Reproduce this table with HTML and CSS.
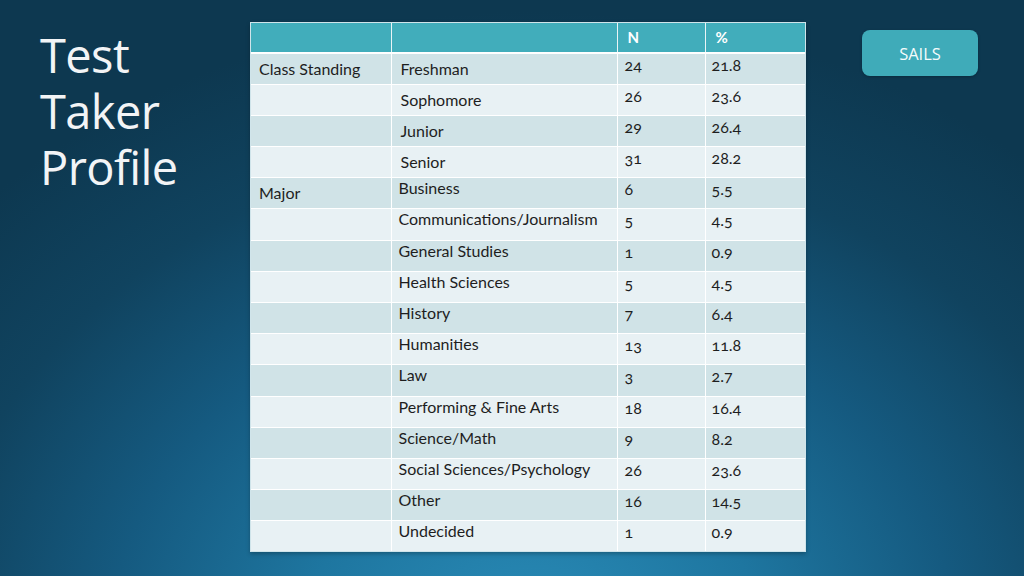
FILE: index.html
```html
<!DOCTYPE html>
<html lang="en">
<head>
<meta charset="utf-8">
<title>Test Taker Profile</title>
<link rel="stylesheet" href="styles.css">
</head>
<body>
<div class="slide">
  <h1 class="title">Test<br>Taker<br>Profile</h1>
  <table class="profile">
    <thead>
      <tr><th></th><th></th><th>N</th><th>%</th></tr>
    </thead>
    <tbody>
      <tr class="d cs"><td class="c1">Class Standing</td><td class="c2">Freshman</td><td class="num">24</td><td class="num">21.8</td></tr>
      <tr class="l cs"><td class="c1"></td><td class="c2">Sophomore</td><td class="num">26</td><td class="num">23.6</td></tr>
      <tr class="d cs"><td class="c1"></td><td class="c2">Junior</td><td class="num">29</td><td class="num">26.4</td></tr>
      <tr class="l cs"><td class="c1"></td><td class="c2">Senior</td><td class="num">31</td><td class="num">28.2</td></tr>
      <tr class="d mj"><td class="c1">Major</td><td class="c2">Business</td><td class="num">6</td><td class="num">5.5</td></tr>
      <tr class="l mj"><td class="c1"></td><td class="c2">Communications/Journalism</td><td class="num">5</td><td class="num">4.5</td></tr>
      <tr class="d mj"><td class="c1"></td><td class="c2">General Studies</td><td class="num">1</td><td class="num">0.9</td></tr>
      <tr class="l mj"><td class="c1"></td><td class="c2">Health Sciences</td><td class="num">5</td><td class="num">4.5</td></tr>
      <tr class="d mj"><td class="c1"></td><td class="c2">History</td><td class="num">7</td><td class="num">6.4</td></tr>
      <tr class="l mj"><td class="c1"></td><td class="c2">Humanities</td><td class="num">13</td><td class="num">11.8</td></tr>
      <tr class="d mj"><td class="c1"></td><td class="c2">Law</td><td class="num">3</td><td class="num">2.7</td></tr>
      <tr class="l mj"><td class="c1"></td><td class="c2">Performing &amp; Fine Arts</td><td class="num">18</td><td class="num">16.4</td></tr>
      <tr class="d mj"><td class="c1"></td><td class="c2">Science/Math</td><td class="num">9</td><td class="num">8.2</td></tr>
      <tr class="l mj"><td class="c1"></td><td class="c2">Social Sciences/Psychology</td><td class="num">26</td><td class="num">23.6</td></tr>
      <tr class="d mj"><td class="c1"></td><td class="c2">Other</td><td class="num">16</td><td class="num">14.5</td></tr>
      <tr class="l mj"><td class="c1"></td><td class="c2">Undecided</td><td class="num">1</td><td class="num">0.9</td></tr>
    </tbody>
  </table>
  <div class="side">
    <button class="sails">SAILS</button>
  </div>
</div>
</body>
</html>
```

FILE: styles.css
```css
html, body {
  margin: 0;
  padding: 0;
  width: 1024px;
  height: 576px;
  overflow: hidden;
}

.slide {
  width: 1024px;
  height: 576px;
  box-sizing: border-box;
  display: flex;
  align-items: flex-start;
  padding: 22px 0 0 0;
  background: radial-gradient(ellipse 75% 110% at 52% 112%, #2a8cb8 0%, #1e76a0 30%, #155a80 55%, #10435f 78%, #0d3850 100%);
  font-family: "Lato", "Open Sans", sans-serif;
}

.title {
  margin: 5px 0 0 40px;
  width: 210px;
  font-family: "Open Sans", "Lato", sans-serif;
  font-weight: 400;
  font-size: 47px;
  line-height: 56px;
  letter-spacing: -0.6px;
  color: #f2f4f6;
}

.profile {
  border-collapse: collapse;
  table-layout: fixed;
  width: 556px;
  font-size: 16px;
  color: #1e1e1e;
  outline: 1px solid #cfe4ea;
  outline-offset: -1px;
  box-shadow: 0 2px 4px rgba(0, 0, 0, 0.25);
}

.profile th {
  background: #41adbb;
  color: #ffffff;
  height: 31px;
  padding: 0 0 1px 10px;
  text-align: left;
  font-weight: 700;
  font-size: 15px;
  border-left: 1px solid #e9f4f6;
  border-bottom: 2px solid #ffffff;
  box-sizing: border-box;
}
.profile th:first-child { border-left: none; width: 141px; }
.profile th:nth-child(2) { width: 226px; }
.profile th:nth-child(3) { width: 88px; }

.profile td {
  height: 31.2px;
  padding: 0 2px 0 8px;
  border-left: 1px solid #ffffff;
  border-top: 1px solid #ffffff;
  box-sizing: border-box;
  line-height: 20px;
  white-space: nowrap;
}
.profile td:first-child { border-left: none; }

.profile tr.d td { background: #d0e3e7; }
.profile tr.l td { background: #e8f1f4; }

.profile td.c1 {
  vertical-align: middle;
  padding-top: 0;
  padding-left: 9px;
}
.profile tr.cs td.c2 {
  vertical-align: middle;
  padding-top: 0;
  padding-left: 9px;
}
.profile tr.mj td.c2 {
  vertical-align: top;
  padding-top: 0;
  padding-left: 7px;
}
.profile td.num {
  vertical-align: top;
  padding-top: 1px;
  padding-left: 7px;
  font-variant-numeric: oldstyle-nums;
}
.profile td.num:last-child { padding-left: 6px; }

.side {
  flex: 1;
  display: flex;
  justify-content: flex-end;
  padding: 8px 46px 0 0;
}

.sails {
  width: 116px;
  height: 46px;
  border: none;
  border-radius: 8px;
  background: #3fabb9;
  color: #f4fbfc;
  font-family: "Open Sans", "Lato", sans-serif;
  font-size: 16.5px;
  padding: 0;
  box-shadow: 0 1px 3px rgba(0, 0, 0, 0.25);
}
```
